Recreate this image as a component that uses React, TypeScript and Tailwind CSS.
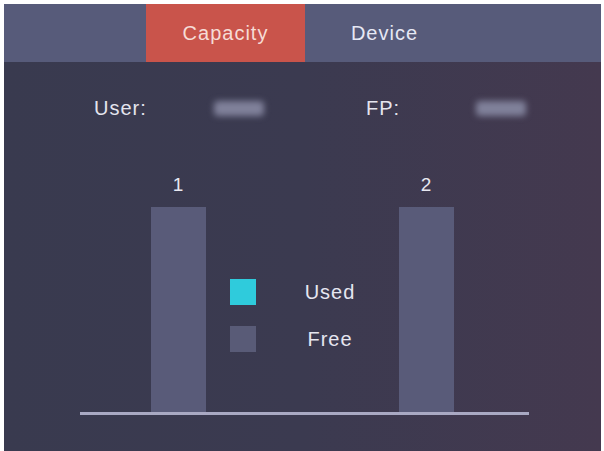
import React from "react";

// Legend entries shown between the two bars
const legend = [
  { label: "Used", color: "bg-[#2fcbdc]" },
  { label: "Free", color: "bg-[#595b77]" },
];

function Bar({ n }: { n: string }) {
  return (
    <div className="flex w-[55px] flex-col items-center">
      <div className="h-[24px] text-[19px] leading-[24px] text-[#e8e8f0]">{n}</div>
      <div className="mt-[10px] h-[205px] w-full bg-[#595b79]" />
    </div>
  );
}

export default function App() {
  return (
    <div
      className="h-[451px] w-[604px] bg-white pl-[4px] pt-[4px] pr-[3px] tracking-[1px]"
      style={{ fontFamily: '"Liberation Sans", Arial, sans-serif' }}
    >
      <div className="flex h-full flex-col">
        {/* tab strip */}
        <div className="flex h-[58px] bg-[#575b7a] pl-[142px]">
          <div className="flex w-[159px] items-center justify-center bg-[#c9544b] text-[20px] text-[#f6dcd6]">
            Capacity
          </div>
          <div className="flex w-[159px] items-center justify-center text-[20px] text-[#e6e8f4]">
            Device
          </div>
        </div>

        <div className="flex flex-1 flex-col bg-gradient-to-r from-[#393a4f] via-[#3b3a50] to-[#44394f]">
          {/* counts */}
          <div className="mt-[36px] flex h-[20px] items-center text-[20px] text-[#e4e4ee]">
            <div className="ml-[90px] w-[120px]">User:</div>
            <div className="h-[15px] w-[50px] rounded-sm bg-[#80819a] blur-[3px]" />
            <div className="ml-[102px] w-[110px]">FP:</div>
            <div className="h-[15px] w-[50px] rounded-sm bg-[#80819a] blur-[3px]" />
          </div>

          {/* chart */}
          <div className="ml-[76px] mt-[55px] flex w-[449px] border-b-[3px] border-[#a9a9c3] pl-[71px]">
            <Bar n="1" />
            <div className="flex w-[193px] flex-col gap-[21px] pl-[24px] pt-[106px]">
              {legend.map((l) => (
                <div key={l.label} className="flex h-[26px] items-center">
                  <div className={`h-[26px] w-[26px] ${l.color}`} />
                  <div className="ml-[44px] w-[60px] text-center text-[20px] text-[#e6e6f0]">
                    {l.label}
                  </div>
                </div>
              ))}
            </div>
            <Bar n="2" />
          </div>
        </div>
      </div>
    </div>
  );
}
